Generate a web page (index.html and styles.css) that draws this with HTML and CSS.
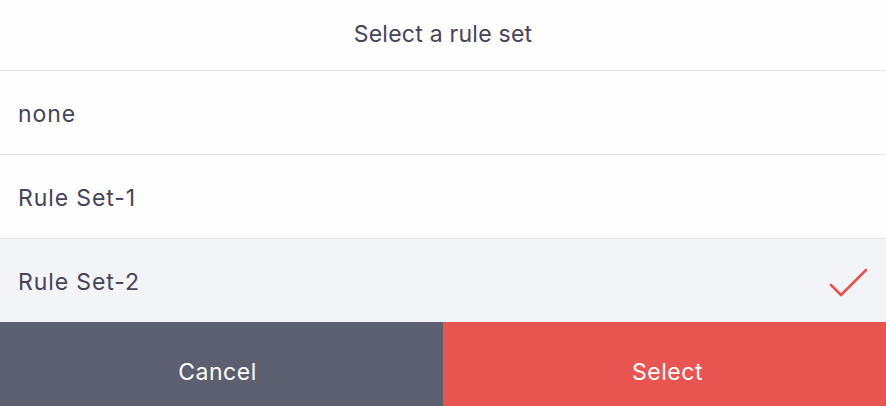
FILE: index.html
```html
<!DOCTYPE html>
<html lang="en">
<head>
    <meta charset="UTF-8">
    <meta name="viewport" content="width=device-width, initial-scale=1.0">
    <title>Select a rule set</title>
    <link rel="stylesheet" href="styles.css">
</head>
<body>
    <div class="sheet">
        <div class="sheet-title">Select a rule set</div>
        <ul class="options">
            <li class="option">none</li>
            <li class="option">Rule Set-1</li>
            <li class="option selected">
                <span>Rule Set-2</span>
                <svg class="check" width="42" height="32" viewBox="0 0 42 32">
                    <path d="M3 18 L13 28 L38 3" fill="none" stroke="#e8524e" stroke-width="2.6" stroke-linecap="round" stroke-linejoin="round"/>
                </svg>
            </li>
        </ul>
        <div class="actions">
            <button class="btn cancel">Cancel</button>
            <button class="btn confirm">Select</button>
        </div>
    </div>
</body>
</html>
```

FILE: styles.css
```css
body {
    margin: 0;
    font-family: Inter, 'Open Sans', sans-serif;
    background: white;
}
.sheet {
    width: 886px;
    height: 406px;
    display: flex;
    flex-direction: column;
    background: #fefeff;
}
.sheet-title {
    height: 71px;
    display: flex;
    align-items: center;
    justify-content: center;
    padding-bottom: 3px;
    box-sizing: border-box;
    font-size: 23px;
    letter-spacing: 0.25px;
    color: #46435a;
    border-bottom: 1px solid #e6e6e8;
}
.options {
    list-style: none;
    margin: 0;
    padding: 0;
}
.option {
    display: flex;
    align-items: center;
    justify-content: space-between;
    padding: 2px 16px 0 18px;
    box-sizing: border-box;
    height: 84px;
    font-size: 23px;
    letter-spacing: 0.9px;
    color: #46435a;
    border-bottom: 1px solid #e6e6e8;
}
.option:last-child {
    height: 83px;
    border-bottom: none;
}
.selected {
    background: #f3f4f8;
}
.check {
    margin-top: 2px;
}
.actions {
    display: flex;
    flex: 1;
}
.btn {
    flex: none;
    width: 50%;
    box-sizing: border-box;
    border: none;
    padding: 16px 0 0;
    font-family: inherit;
    font-size: 23px;
    letter-spacing: 0.5px;
    color: white;
    cursor: pointer;
}
.cancel {
    background: #5c5f70;
    padding-right: 8px;
}
.confirm {
    background: #e85550;
    padding-left: 6px;
}
```
